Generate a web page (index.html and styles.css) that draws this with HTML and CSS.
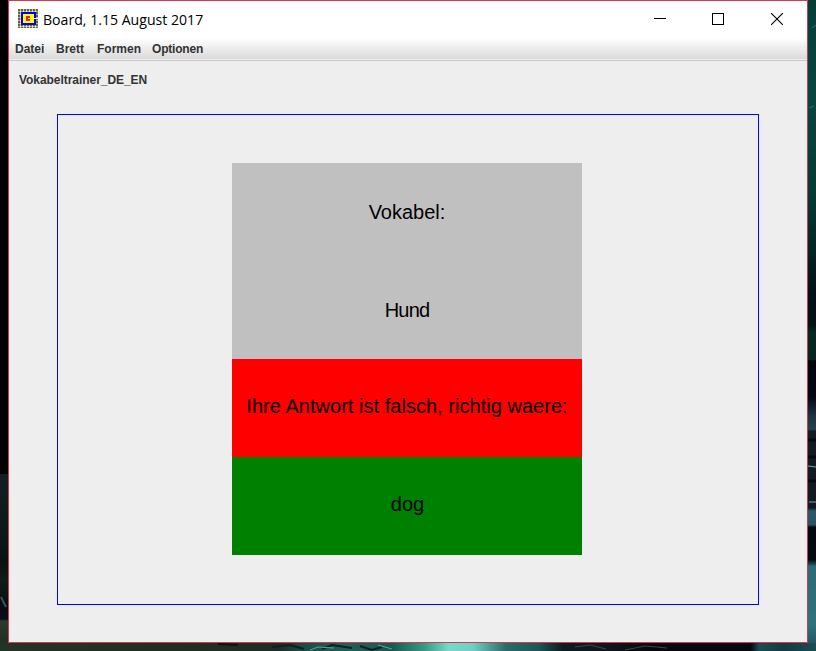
FILE: index.html
```html
<!DOCTYPE html>
<html lang="de">
<head>
<meta charset="utf-8">
<title>Board, 1.15 August 2017</title>
<link rel="stylesheet" href="styles.css">
</head>
<body>
<svg class="wallpaper" width="816" height="651" viewBox="0 0 816 651" aria-hidden="true">
  <defs>
    <linearGradient id="right" x1="0" y1="0" x2="0" y2="651" gradientUnits="userSpaceOnUse">
      <stop offset="0" stop-color="#063e36"/><stop offset=".15" stop-color="#08463d"/>
      <stop offset=".3" stop-color="#053a32"/><stop offset=".39" stop-color="#02231f"/>
      <stop offset=".46" stop-color="#011014"/><stop offset=".5" stop-color="#01120f"/>
      <stop offset=".51" stop-color="#06281f"/><stop offset=".553" stop-color="#06251e"/>
      <stop offset=".554" stop-color="#02040a"/><stop offset=".61" stop-color="#040812"/>
      <stop offset=".64" stop-color="#1e3442"/><stop offset=".66" stop-color="#24404e"/>
      <stop offset=".662" stop-color="#121c20"/><stop offset=".78" stop-color="#121b1f"/>
      <stop offset=".785" stop-color="#2c5965"/><stop offset=".806" stop-color="#285461"/>
      <stop offset=".81" stop-color="#04090f"/><stop offset=".86" stop-color="#040a10"/>
      <stop offset=".87" stop-color="#2c6a74"/><stop offset=".96" stop-color="#2e737c"/>
      <stop offset="1" stop-color="#1d4b53"/>
    </linearGradient>
    <linearGradient id="left" x1="0" y1="474" x2="0" y2="651" gradientUnits="userSpaceOnUse">
      <stop offset="0" stop-color="#141d1f"/><stop offset=".3" stop-color="#10191a"/>
      <stop offset=".5" stop-color="#0b1010"/><stop offset=".6" stop-color="#131b16"/>
      <stop offset=".75" stop-color="#090c13"/><stop offset=".82" stop-color="#0b0f14"/>
      <stop offset=".83" stop-color="#2b3a2b"/><stop offset="1" stop-color="#1e2b21"/>
    </linearGradient>
    <linearGradient id="bottom" x1="0" y1="0" x2="816" y2="0" gradientUnits="userSpaceOnUse">
      <stop offset="0" stop-color="#253326"/><stop offset=".25" stop-color="#202e22"/>
      <stop offset=".34" stop-color="#1d2c25"/><stop offset=".37" stop-color="#1c4b42"/>
      <stop offset=".42" stop-color="#1d6256"/><stop offset=".48" stop-color="#165a51"/>
      <stop offset=".52" stop-color="#369984"/><stop offset=".55" stop-color="#78d9c8"/>
      <stop offset=".58" stop-color="#6bd0c4"/><stop offset=".62" stop-color="#246e68"/>
      <stop offset=".66" stop-color="#1c5657"/><stop offset=".69" stop-color="#0b1c20"/>
      <stop offset=".74" stop-color="#10171a"/><stop offset=".8" stop-color="#05090b"/>
      <stop offset=".92" stop-color="#04090c"/><stop offset=".93" stop-color="#1d4b53"/>
      <stop offset=".96" stop-color="#153a41"/><stop offset="1" stop-color="#1d4b53"/>
    </linearGradient>
  </defs>
  <rect width="816" height="651" fill="#000"/>
  <rect y="474" width="8" height="177" fill="url(#left)"/>
  <rect x="808" width="8" height="651" fill="url(#right)"/>
  <rect y="643" width="816" height="8" fill="url(#bottom)"/>
  <path d="M812 28l4-3M809 108l5-2" stroke="#2f6f66" fill="none"/>
  <path d="M808 440h8M808 457h8M808 481h8" stroke="#06090b" stroke-width="3"/>
  <path d="M808 466l8 1M809 502h7" stroke="#7ba3ae"/>
  <path d="M1 597l2 4 3 6" stroke="#3f4f62" stroke-width="2" fill="none"/>
  <path d="M218 644l20 1" stroke="#0b1210" stroke-width="2"/>
  <path d="M272 647l18-2 14 4M322 649l10-4 20 3M360 646l12 4 10-3" stroke="#0a211e" stroke-width="2" fill="none"/>
  <path d="M310 650l8-3 16 1M378 645l14 4" stroke="#54a797" fill="none"/>
  <path d="M575 647l15-2 16 4M625 650l20-4 22 2" stroke="#36474a" fill="none"/>
</svg>
<main class="window">
  <header class="titlebar">
    <svg class="app-icon" width="20" height="19" viewBox="0 0 20 19" shape-rendering="crispEdges">
      <defs><pattern id="grid" width="3" height="3" patternUnits="userSpaceOnUse">
        <rect width="3" height="3" fill="#f3f0d4"/><path d="M0 0h2v3h-2zM0 0h3v2h-3z" fill="#666735"/>
        <rect x="2" y="0" width="1" height="2" fill="#c4c2a0"/><rect x="0" y="2" width="2" height="1" fill="#b3b18a"/>
      </pattern></defs>
      <rect width="20" height="19" fill="url(#grid)"/>
      <rect x="3" y="3" width="15" height="13" fill="#00f"/>
      <rect x="5" y="5" width="11" height="9" fill="#ff0"/>
      <path d="M15 9h5v1h-5z" fill="#ffe"/>
      <path d="M8 7h4v2h-2v1h2v2h-4z" fill="#f01c28"/>
    </svg>
    <h1 class="title">Board, 1.15 August 2017</h1>
    <div class="controls">
      <svg width="12" height="12" viewBox="0 0 12 12" shape-rendering="crispEdges"><path d="M0 5.5h12" stroke="#000"/></svg>
      <svg width="12" height="12" viewBox="0 0 12 12" shape-rendering="crispEdges"><path d="M.5 .5h11v11h-11z" stroke="#000" fill="none"/></svg>
      <svg width="12" height="12" viewBox="0 0 12 12"><path d="M0 0l12 12M12 0L0 12" stroke="#000" stroke-width="1.1"/></svg>
    </div>
  </header>
  <nav class="menubar">
    <span class="m1">Datei</span><span class="m2">Brett</span><span class="m3">Formen</span><span class="m4">Optionen</span>
  </nav>
  <p class="message">Vokabeltrainer_DE_EN</p>
  <section class="board">
    <div class="cards">
      <div class="card">Vokabel:</div>
      <div class="card word">Hund</div>
      <div class="card wrong">Ihre Antwort ist falsch, richtig waere:</div>
      <div class="card right">dog</div>
    </div>
  </section>
</main>
</body>
</html>
```
FILE: styles.css
```css
* { box-sizing: border-box; }
html, body { margin: 0; width: 816px; height: 651px; overflow: hidden; background: #000; }
.wallpaper { position: absolute; top: 0; left: 0; display: block; }
.window {
  position: relative;
  width: 800px; height: 643px; margin-left: 8px;
  border: 1px solid #d13a52; background: #eee;
  display: flex; flex-direction: column;
  font-family: "Liberation Sans", Arial, sans-serif;
}
.titlebar { height: 37px; background: #fff; display: flex; align-items: flex-start; padding: 8px 24px 0 9px; }
.app-icon { flex: none; }
.title {
  margin: -1px 0 0 5px; font: 400 15px/22px "Open Sans", "Noto Sans", sans-serif; color: #000;
  white-space: nowrap; transform-origin: 0 50%; transform: scaleX(.94);
}
.controls { margin: 4px 0 0 auto; display: flex; gap: 46px; }
.controls svg { display: block; }
.controls svg:last-child { margin-left: 1px; }
.menubar {
  height: 23px; padding: 0 6px; display: flex; gap: 12px;
  background: linear-gradient(#fff, #dadada 21px, #eee 21px); border-bottom: 1px solid #c9c9c9;
  font-weight: 700; font-size: 12px; line-height: 22px; color: #333;
}
.m1 { width: 29px; }
.m2 { width: 29px; }
.m3 { width: 43px; }
.m4 { letter-spacing: -.2px; }
.message { margin: 12px 0 0 10px; font-weight: 700; font-size: 12px; line-height: 15px; letter-spacing: -.05px; color: #333; }
.board {
  width: 702px; height: 491px; margin: 26px 0 0 48px; border: 1px solid #00f;
  padding: 48px 0 0 174px;
}
.cards { width: 350px; height: 392px; display: grid; grid-template-rows: repeat(4, 98px); }
.card {
  background: #c0c0c0; color: #000; font-size: 20px; line-height: 98px; text-align: center; white-space: nowrap;
}
.word { letter-spacing: -.8px; }
.wrong { background: #f00; line-height: 94px; letter-spacing: .03px; }
.right { background: #008000; line-height: 94px; padding-left: 1px; }
```
